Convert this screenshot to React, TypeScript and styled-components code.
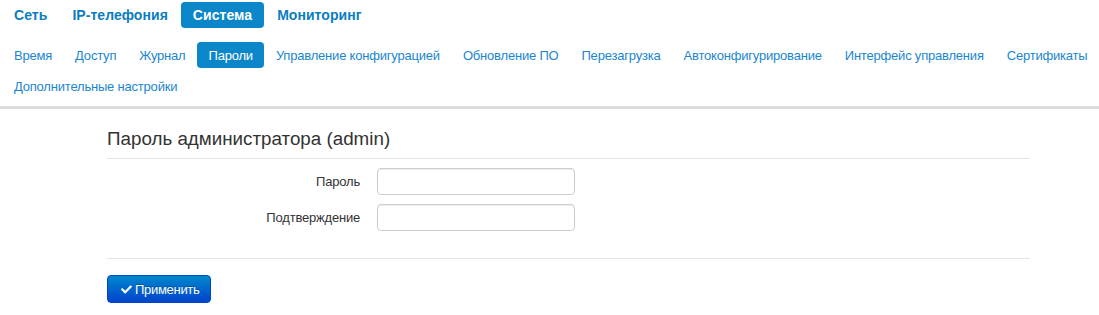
import React, { useState } from "react";
import styled, { createGlobalStyle } from "styled-components";
import { FaCheck } from "react-icons/fa";

const GlobalStyle = createGlobalStyle`
  html, body {
    margin: 0;
    padding: 0;
    background: #ffffff;
    font-family: "Liberation Sans", Arial, sans-serif;
    font-size: 13px;
    color: #333333;
    overflow-x: hidden;
  }
  * {
    box-sizing: border-box;
  }
`;

const topItems = ["Сеть", "IP-телефония", "Система", "Мониторинг"];
const subItems = [
  "Время",
  "Доступ",
  "Журнал",
  "Пароли",
  "Управление конфигурацией",
  "Обновление ПО",
  "Перезагрузка",
  "Автоконфигурирование",
  "Интерфейс управления",
  "Сертификаты",
  "Дополнительные настройки",
];

const App = () => {
  const [top, setTop] = useState("Система");
  const [sub, setSub] = useState("Пароли");
  const [password, setPassword] = useState("");
  const [confirm, setConfirm] = useState("");

  return (
    <>
      <GlobalStyle />
      <Header>
        <TopNav>
          {topItems.map((item) => (
            <TopPill
              key={item}
              $active={item === top}
              onClick={() => setTop(item)}
            >
              {item}
            </TopPill>
          ))}
        </TopNav>
        <SubNav>
          {subItems.map((item) => (
            <SubPill
              key={item}
              $active={item === sub}
              onClick={() => setSub(item)}
            >
              {item}
            </SubPill>
          ))}
        </SubNav>
      </Header>
      <Content>
        <Legend>Пароль администратора (admin)</Legend>
        <Fields>
          <FieldRow>
            <Label>Пароль</Label>
            <Input
              type="password"
              value={password}
              onChange={(e) => setPassword(e.target.value)}
            />
          </FieldRow>
          <FieldRow>
            <Label>Подтверждение</Label>
            <Input
              type="password"
              value={confirm}
              onChange={(e) => setConfirm(e.target.value)}
            />
          </FieldRow>
        </Fields>
        <Actions>
          <ApplyButton type="button">
            <FaCheck className="apply_icon" />
            Применить
          </ApplyButton>
        </Actions>
      </Content>
    </>
  );
};

export default App;

const Header = styled.div`
  padding-top: 2px;
  border-bottom: 3px solid #dddddd;
`;

const TopNav = styled.div`
  display: flex;
  align-items: center;
  gap: 1px;
  height: 26px;
  padding-left: 2px;
`;

interface PillProps {
  $active?: boolean;
}

const TopPill = styled.div<PillProps>`
  display: flex;
  align-items: center;
  height: 26px;
  padding: 0 12px;
  border-radius: 4px;
  font-size: 14px;
  font-weight: bold;
  letter-spacing: 0.05px;
  cursor: pointer;
  color: ${({ $active }) => ($active ? "#ffffff" : "#0a7dc0")};
  background-color: ${({ $active }) => ($active ? "#0a86c9" : "transparent")};
`;

/* the row is a few px wider than the window, as in the original page */
const SubNav = styled.div`
  display: flex;
  flex-wrap: wrap;
  column-gap: 1px;
  row-gap: 5px;
  margin-right: -6px;
  padding: 14px 0 7px 3px;
`;

const SubPill = styled.div<PillProps>`
  display: flex;
  align-items: center;
  height: 26px;
  padding: 0 11px;
  border-radius: 4px;
  font-size: 13px;
  letter-spacing: -0.2px;
  white-space: nowrap;
  cursor: pointer;
  color: ${({ $active }) => ($active ? "#ffffff" : "#1a86d0")};
  background-color: ${({ $active }) => ($active ? "#0a86c9" : "transparent")};
`;

const Content = styled.div`
  width: 923px;
  margin-left: 107px;
`;

const Legend = styled.div`
  padding-top: 19px;
  height: 50px;
  line-height: 22px;
  font-size: 18.8px;
  color: #333333;
  border-bottom: 1px solid #e5e5e5;
`;

const Fields = styled.div`
  display: flex;
  flex-direction: column;
  gap: 9px;
  padding: 9px 0 27px;
  border-bottom: 1px solid #e5e5e5;
`;

const FieldRow = styled.div`
  display: flex;
  align-items: center;
  gap: 17px;
`;

const Label = styled.label`
  width: 253px;
  text-align: right;
  font-size: 13px;
  letter-spacing: -0.2px;
  color: #333333;
`;

const Input = styled.input`
  width: 198px;
  height: 27px;
  padding: 4px 6px;
  border: 1px solid #cccccc;
  border-radius: 4px;
  font-family: inherit;
  font-size: 13px;
  color: #555555;
  box-shadow: inset 0 1px 1px rgba(0, 0, 0, 0.075);
  outline: none;
  &:focus {
    border-color: rgba(82, 168, 236, 0.8);
  }
`;

const Actions = styled.div`
  padding-top: 16px;
`;

const ApplyButton = styled.button`
  display: inline-flex;
  align-items: center;
  gap: 3px;
  width: 104px;
  height: 28px;
  padding: 0 0 0 13px;
  border: 1px solid #0044cc;
  border-radius: 4px;
  background-image: linear-gradient(to bottom, #0088cc, #0044cc);
  color: #ffffff;
  font-family: inherit;
  font-size: 13px;
  letter-spacing: -0.3px;
  cursor: pointer;
  text-shadow: 0 -1px 0 rgba(0, 0, 0, 0.25);
  .apply_icon {
    width: 11px;
    height: 11px;
  }
`;
